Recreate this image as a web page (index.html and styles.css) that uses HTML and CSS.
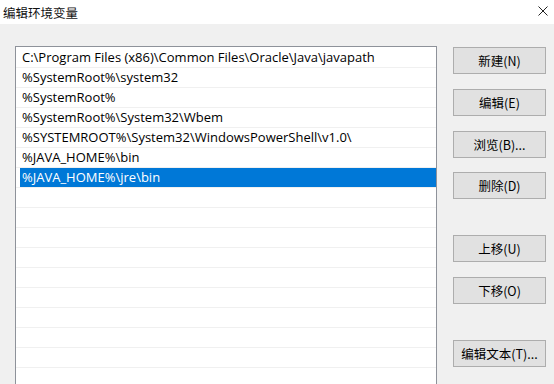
FILE: index.html
```html
<!DOCTYPE html>
<html lang="zh-CN">
<head>
    <meta charset="UTF-8">
    <title>编辑环境变量</title>
    <link rel="stylesheet" href="styles.css">
</head>
<body>

<!-- Barra de título -->
<div class="titlebar">
    <span class="title">编辑环境变量</span>
    <svg class="close" width="10" height="10" viewBox="0 0 10 10">
        <path d="M0.5 0.5 L9.5 9.5 M9.5 0.5 L0.5 9.5" stroke="#222" stroke-width="1" fill="none"/>
    </svg>
</div>

<div class="dialog">
    <!-- Lista de caminhos -->
    <ul class="path-list">
        <li><span class="row-text">C:\Program Files (x86)\Common Files\Oracle\Java\javapath</span></li>
        <li><span class="row-text">%SystemRoot%\system32</span></li>
        <li><span class="row-text">%SystemRoot%</span></li>
        <li><span class="row-text">%SystemRoot%\System32\Wbem</span></li>
        <li><span class="row-text">%SYSTEMROOT%\System32\WindowsPowerShell\v1.0\</span></li>
        <li><span class="row-text">%JAVA_HOME%\bin</span></li>
        <li class="selected"><span class="row-text">%JAVA_HOME%\jre\bin</span></li>
        <li><span class="row-text"></span></li>
        <li><span class="row-text"></span></li>
        <li><span class="row-text"></span></li>
        <li><span class="row-text"></span></li>
        <li><span class="row-text"></span></li>
        <li><span class="row-text"></span></li>
        <li><span class="row-text"></span></li>
        <li><span class="row-text"></span></li>
        <li><span class="row-text"></span></li>
        <li><span class="row-text"></span></li>
    </ul>

    <!-- Botões -->
    <div class="actions">
        <button>新建(N)</button>
        <button>编辑(E)</button>
        <button>浏览(B)...</button>
        <button class="tight">删除(D)</button>
        <button class="group">上移(U)</button>
        <button>下移(O)</button>
        <button class="group">编辑文本(T)...</button>
    </div>
</div>

</body>
</html>
```

FILE: styles.css
```css
/* Estilos globais */
* {
    margin: 0;
    padding: 0;
    box-sizing: border-box;
}

html, body {
    width: 554px;
    height: 384px;
    overflow: hidden;
}

body {
    background-color: #f0f0f0;
    font-family: "Open Sans", "Noto Sans CJK SC", sans-serif;
    color: #000;
}

.titlebar {
    height: 24px;
    background-color: #fff;
    display: flex;
    align-items: center;
    justify-content: space-between;
    padding: 0 6px 0 3px;
}

.title {
    font-family: "Noto Sans CJK SC", sans-serif;
    font-size: 12.5px;
    color: #111;
}

.close {
    margin-top: -2px;
}

.dialog {
    display: flex;
    align-items: flex-start;
    padding: 22px 0 0 15px;
}

/* A lista continua além da borda inferior da janela */
.path-list {
    list-style: none;
    width: 422px;
    height: 338px;
    background-color: #fff;
    border: 1px solid #8e929a;
    border-bottom: none;
    overflow: hidden;
    padding-top: 1px;
}

.path-list li {
    height: 20px;
    padding-left: 4px;
    border-bottom: 1px solid #f0f0f0;
}

.row-text {
    display: block;
    height: 19px;
    line-height: 19px;
    padding-left: 2px;
    font-size: 13px;
    white-space: nowrap;
}

.path-list li.selected .row-text {
    background-color: #0078d7;
    color: #fff;
}

.actions {
    display: flex;
    flex-direction: column;
    gap: 15px;
    margin: 1px 0 0 16px;
}

.actions button {
    width: 93px;
    height: 27px;
    background-color: #e1e1e1;
    border: 1px solid #adadad;
    font-family: "Noto Sans CJK SC", sans-serif;
    font-size: 12.5px;
    color: #000;
}

.actions button.tight {
    margin-top: -1px;
}

.actions button.group {
    margin-top: 21px;
}
```
